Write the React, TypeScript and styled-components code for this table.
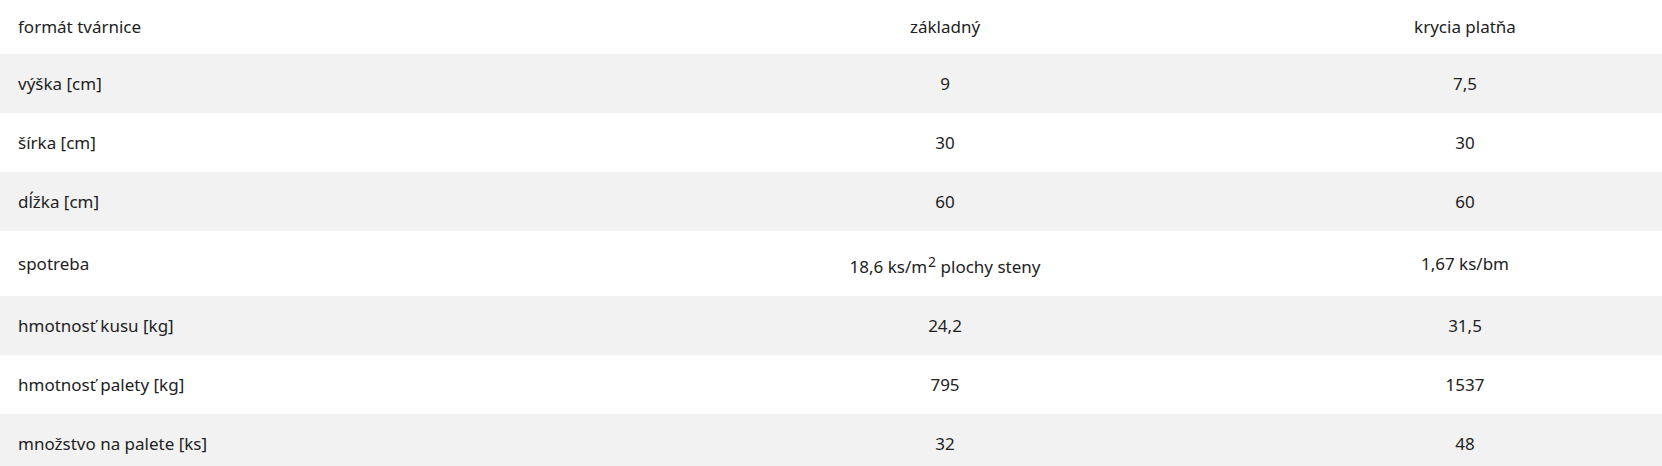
import React from "react";
import { createGlobalStyle, styled } from "styled-components";

const GlobalStyle = createGlobalStyle`
  html, body {
    margin: 0;
    padding: 0;
    background: #fff;
  }
  body {
    font-family: "Noto Sans", "Open Sans", "Liberation Sans", sans-serif;
    color: #222;
  }
`;

const Table = styled.table`
  width: 1662px;
  border-collapse: collapse;
  table-layout: fixed;
  font-size: 17px;
  line-height: 24px;
`;

const Row = styled.tr<{ $shade?: boolean }>`
  background: ${(p) => (p.$shade ? "#f2f2f2" : "#fff")};
`;

const Cell = styled.td<{ $head?: boolean; $center?: boolean }>`
  padding: ${(p) => (p.$head ? "15px 18px" : "18px 18px 17px")};
  text-align: ${(p) => (p.$center ? "center" : "left")};
  vertical-align: middle;
  white-space: nowrap;

  sup {
    font-size: 14px;
    line-height: 26px;
    vertical-align: 6px;
    margin-left: 1px;
  }
`;

type Item = { label: string; a: React.ReactNode; b: React.ReactNode };

const rows: Item[] = [
  { label: "výška [cm]", a: "9", b: "7,5" },
  { label: "šírka [cm]", a: "30", b: "30" },
  { label: "dĺžka [cm]", a: "60", b: "60" },
  {
    label: "spotreba",
    a: (
      <>
        18,6 ks/m<sup>2</sup> plochy steny
      </>
    ),
    b: "1,67 ks/bm",
  },
  { label: "hmotnosť kusu [kg]", a: "24,2", b: "31,5" },
  { label: "hmotnosť palety [kg]", a: "795", b: "1537" },
  { label: "množstvo na palete [ks]", a: "32", b: "48" },
];

const App = () => {
  return (
    <>
      <GlobalStyle />
      <Table>
        <colgroup>
          <col style={{ width: 622 }} />
          <col style={{ width: 646 }} />
          <col style={{ width: 394 }} />
        </colgroup>
        <tbody>
          <Row>
            <Cell $head>formát tvárnice</Cell>
            <Cell $head $center>základný</Cell>
            <Cell $head $center>krycia platňa</Cell>
          </Row>
          {rows.map((r, i) => (
            <Row key={r.label} $shade={i % 2 === 0}>
              <Cell>{r.label}</Cell>
              <Cell $center>{r.a}</Cell>
              <Cell $center>{r.b}</Cell>
            </Row>
          ))}
        </tbody>
      </Table>
    </>
  );
};

export default App;
